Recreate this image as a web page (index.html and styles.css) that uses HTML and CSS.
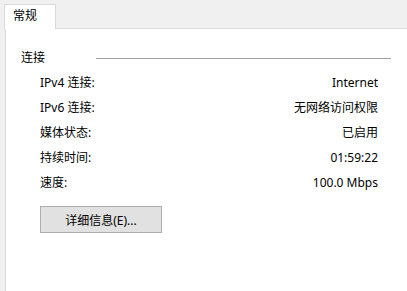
FILE: index.html
```html
<!DOCTYPE html>
<html lang="zh-CN">
<head>
<meta charset="utf-8">
<link rel="stylesheet" href="styles.css">
</head>
<body>
<div class="window">
  <div class="tabs">
    <div class="tab">常规</div>
  </div>
  <div class="panel">
    <div class="group-head">
      <span class="group-title">连接</span>
      <span class="group-line"></span>
    </div>
    <div class="rows">
      <div class="row"><span class="label">IPv4 连接:</span><span class="value">Internet</span></div>
      <div class="row"><span class="label">IPv6 连接:</span><span class="value">无网络访问权限</span></div>
      <div class="row"><span class="label">媒体状态:</span><span class="value">已启用</span></div>
      <div class="row"><span class="label">持续时间:</span><span class="value">01:59:22</span></div>
      <div class="row"><span class="label">速度:</span><span class="value">100.0 Mbps</span></div>
    </div>
    <div class="actions">
      <button class="btn" type="button">详细信息(E)...</button>
    </div>
  </div>
</div>
</body>
</html>
```

FILE: styles.css
```css
html, body {
  margin: 0;
  padding: 0;
  background: #f0f0f0;
  width: 407px;
  height: 291px;
  overflow: hidden;
  font-family: "Noto Sans", "Noto Sans CJK SC", sans-serif;
  font-size: 12px;
  color: #000;
}

.window {
  display: flex;
  flex-direction: column;
}

.tabs {
  display: flex;
  padding: 4px 0 0 4px;
  height: 24px;
  position: relative;
  z-index: 1;
}

.tab {
  box-sizing: border-box;
  width: 52px;
  height: 25px;
  background: #fff;
  border: 1px solid #d9d9d9;
  border-bottom: none;
  padding-left: 8px;
  line-height: 22px;
}

.panel {
  margin-left: 5px;
  width: 402px;
  height: 263px;
  background: #fff;
  border-top: 1px solid #d9d9d9;
  border-left: 1px solid #d9d9d9;
  padding-top: 19px;
  box-sizing: border-box;
}

.group-head {
  box-sizing: border-box;
  display: flex;
  align-items: center;
  width: 385px;
  height: 20px;
  padding-left: 15px;
}

.group-title {
  line-height: 20px;
}

.group-line {
  display: block;
  width: 295px;
  height: 1px;
  margin-left: auto;
  background: #a0a0a0;
}

.rows {
  display: flex;
  flex-direction: column;
  margin-top: 2px;
  padding-left: 34px;
  width: 338px;
}

.row {
  display: flex;
  justify-content: space-between;
  height: 25px;
  line-height: 25px;
}

.actions {
  margin-top: 11px;
  padding-left: 34px;
}

.btn {
  box-sizing: border-box;
  width: 122px;
  height: 27px;
  background: #e1e1e1;
  border: 1px solid #adadad;
  font-family: "Noto Sans", "Noto Sans CJK SC", sans-serif;
  font-size: 12px;
  color: #000;
  padding: 0;
  margin: 0;
}
```
